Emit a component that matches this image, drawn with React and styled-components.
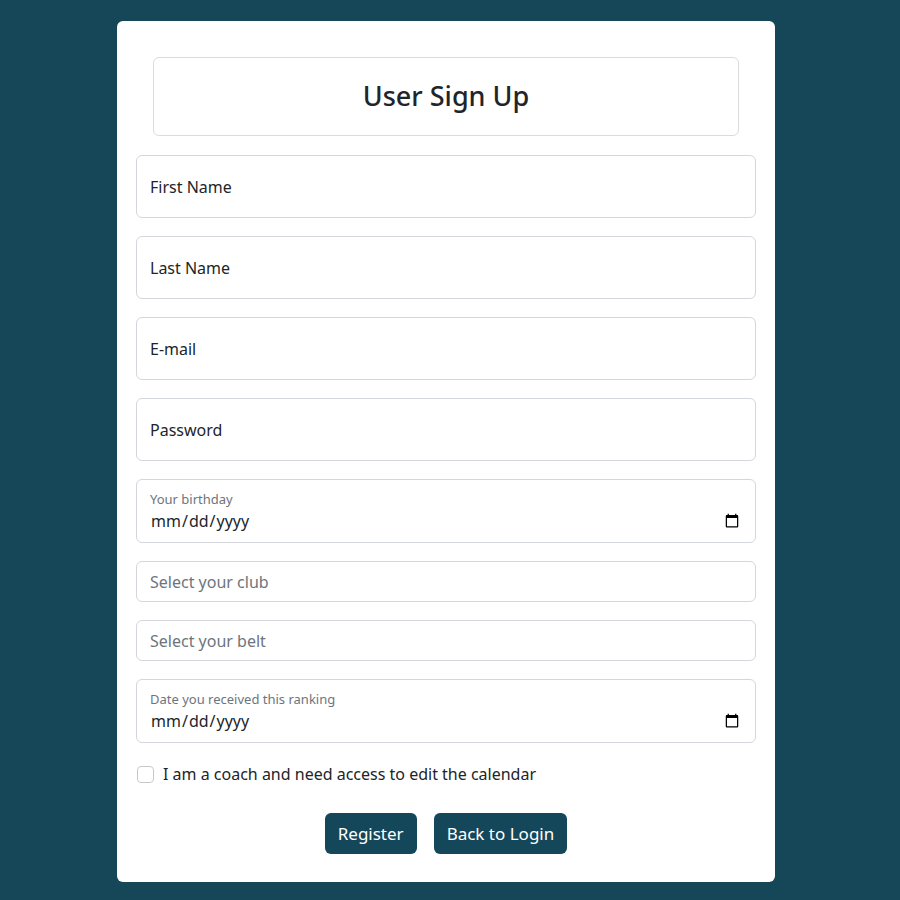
import styled, { createGlobalStyle } from "styled-components";

const GlobalStyle = createGlobalStyle`
  * { box-sizing: border-box; }
  body {
    margin: 0;
    background: #154759;
    font-family: "Noto Sans", "Open Sans", sans-serif;
    color: #212529;
  }
`;

export default function App() {
  return (
    <Page>
      <GlobalStyle />
      <Card>
        <TitleBox>
          <Title>User Sign Up</Title>
        </TitleBox>

        <Form onSubmit={(e) => e.preventDefault()}>
          <TallInput placeholder="First Name" />
          <TallInput placeholder="Last Name" />
          <TallInput placeholder="E-mail" type="email" />
          <TallInput placeholder="Password" type="password" />

          <DateField>
            <SmallLabel>Your birthday</SmallLabel>
            <DateInput type="date" />
          </DateField>

          <SelectBox>Select your club</SelectBox>
          <SelectBox>Select your belt</SelectBox>

          <DateField>
            <SmallLabel>Date you received this ranking</SmallLabel>
            <DateInput type="date" />
          </DateField>

          <CheckRow>
            <Check type="checkbox" />
            I am a coach and need access to edit the calendar
          </CheckRow>

          <Buttons>
            <Button type="submit">Register</Button>
            <Button type="button">Back to Login</Button>
          </Buttons>
        </Form>
      </Card>
    </Page>
  );
}

const Page = styled.div`
  display: flex;
  justify-content: center;
  padding: 21px 8px 18px 0;
  min-height: 900px;
`;

const Card = styled.div`
  width: 658px;
  height: 861px;
  background: #fff;
  border-radius: 6px;
  padding: 36px 19px 0;
`;

const TitleBox = styled.div`
  margin: 0 17px;
  height: 79px;
  border: 1px solid #d9dcdf;
  border-radius: 6px;
  display: flex;
  align-items: center;
  justify-content: center;
`;

const Title = styled.h1`
  margin: 0 0 3px;
  font-size: 27px;
  font-weight: 500;
  color: #212529;
`;

const Form = styled.form`
  display: flex;
  flex-direction: column;
  gap: 18px;
  margin-top: 19px;
`;

const TallInput = styled.input`
  height: 63px;
  width: 100%;
  border: 1px solid #d3d7dc;
  border-radius: 6px;
  padding: 0 13px;
  font: inherit;
  font-size: 16px;
  color: #212529;
  outline: none;

  &::placeholder {
    color: #212529;
  }
`;

const DateField = styled.label`
  height: 64px;
  border: 1px solid #d3d7dc;
  border-radius: 6px;
  padding: 10px 13px 0;
  display: flex;
  flex-direction: column;
`;

const SmallLabel = styled.span`
  font-size: 13px;
  color: #6c757d;
  line-height: 18px;
`;

const DateInput = styled.input`
  border: none;
  padding: 0;
  margin: 0;
  font: inherit;
  font-size: 16px;
  line-height: 26px;
  height: 26px;
  color: #212529;
  outline: none;
  background: transparent;
`;

const SelectBox = styled.div`
  height: 41px;
  border: 1px solid #d3d7dc;
  border-radius: 6px;
  padding: 0 13px;
  display: flex;
  align-items: center;
  font-size: 16px;
  color: #6c757d;
`;

const CheckRow = styled.label`
  display: flex;
  align-items: center;
  gap: 9px;
  font-size: 16px;
  color: #212529;
  margin-top: 2px;
`;

const Check = styled.input`
  appearance: none;
  width: 17px;
  height: 17px;
  margin: 0 0 0 1px;
  border: 1px solid #c4c8cc;
  border-radius: 4px;
  background: #fff;
`;

const Buttons = styled.div`
  display: flex;
  justify-content: center;
  gap: 17px;
  margin-top: 10px;
`;

const Button = styled.button`
  background: #14475a;
  color: #fff;
  border: none;
  border-radius: 6px;
  height: 41px;
  padding: 0 13px;
  font: inherit;
  font-size: 17px;
  cursor: pointer;
`;
